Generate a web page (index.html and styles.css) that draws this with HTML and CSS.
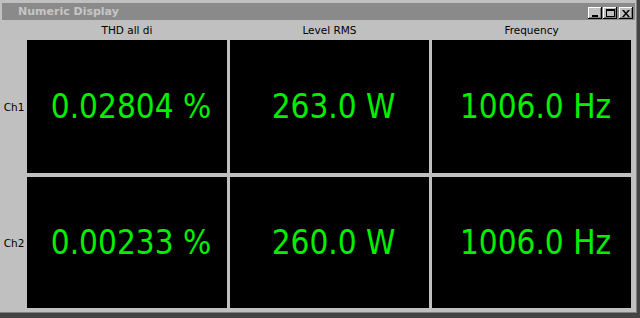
FILE: index.html
```html
<!DOCTYPE html>
<html lang="en">
<head>
  <meta charset="UTF-8">
  <title>Numeric Display</title>
  <link rel="stylesheet" href="styles.css">
</head>
<body>
  <div class="window">
    <div class="titlebar">
      <span class="title">Numeric Display</span>
      <div class="ctrls">
        <button type="button" class="ctrl">
          <svg width="7" height="7" viewBox="0 0 7 7"><rect x="0" y="5" width="6" height="2" fill="#000"/></svg>
        </button>
        <button type="button" class="ctrl">
          <svg width="9" height="8" viewBox="0 0 9 8"><rect x="0.5" y="0.5" width="8" height="7" fill="none" stroke="#000"/><rect x="0" y="0" width="9" height="2" fill="#000"/></svg>
        </button>
        <button type="button" class="ctrl close">
          <svg width="8" height="7" viewBox="0 0 8 7"><path d="M0 0h2l2 2.5 2-2.5h2l-3 3.5 3 3.5h-2l-2-2.5-2 2.5h-2l3-3.5z" fill="#000"/></svg>
        </button>
      </div>
    </div>
    <div class="grid">
      <div class="corner"></div>
      <div class="head">THD all di</div>
      <div class="head">Level RMS</div>
      <div class="head">Frequency</div>

      <div class="ch">Ch1</div>
      <div class="cell">0.02804 %</div>
      <div class="cell">263.0 W</div>
      <div class="cell">1006.0 Hz</div>

      <div class="ch">Ch2</div>
      <div class="cell">0.00233 %</div>
      <div class="cell">260.0 W</div>
      <div class="cell">1006.0 Hz</div>
    </div>
  </div>
</body>
</html>
```
FILE: styles.css
```css
:root {
  --face: #c0c0c0;
  --green: #00f000;
}

* {
  box-sizing: border-box;
}

body {
  margin: 0;
  background: #c0c0c0;
  font-family: "DejaVu Sans", Verdana, sans-serif;
}

.window {
  width: 640px;
  height: 318px;
  padding: 3px 0 0 2px;
  background: var(--face);
  border-right: 3px solid #444;
  border-bottom: 5px solid #444;
  box-shadow: inset -1px -1px 0 #808080;
  overflow: hidden;
}

.titlebar {
  display: flex;
  align-items: center;
  width: 633px;
  height: 17px;
  padding-left: 16px;
  background: #8a8a8a;
}

.title {
  flex: 1;
  color: #c6c6c6;
  font-size: 11px;
  font-weight: bold;
}

.ctrls {
  display: flex;
  gap: 1px;
  margin-right: 2px;
  margin-top: 3px;
}

.ctrl {
  display: flex;
  align-items: center;
  justify-content: center;
  width: 14px;
  height: 12px;
  padding: 0;
  border: 0;
  background: var(--face);
  box-shadow: inset -1px -1px 0 #000, inset 1px 1px 0 #fff, inset -2px -2px 0 #808080;
}

.close {
  margin-left: 1px;
}

.grid {
  display: grid;
  grid-template-columns: 22px 200px 199px 199px;
  grid-template-rows: 16px 133px 131px;
  gap: 4px 3px;
}

.head,
.ch {
  display: flex;
  align-items: center;
  justify-content: center;
  font-size: 10.5px;
  color: #000;
}

.head {
  padding-top: 4px;
}

.ch {
  padding-left: 2px;
}

.cell {
  display: flex;
  align-items: center;
  justify-content: center;
  padding-left: 8px;
  background: #000;
  color: var(--green);
  font-family: "DejaVu Sans Condensed", "DejaVu Sans", sans-serif;
  font-size: 33px;
}
```
